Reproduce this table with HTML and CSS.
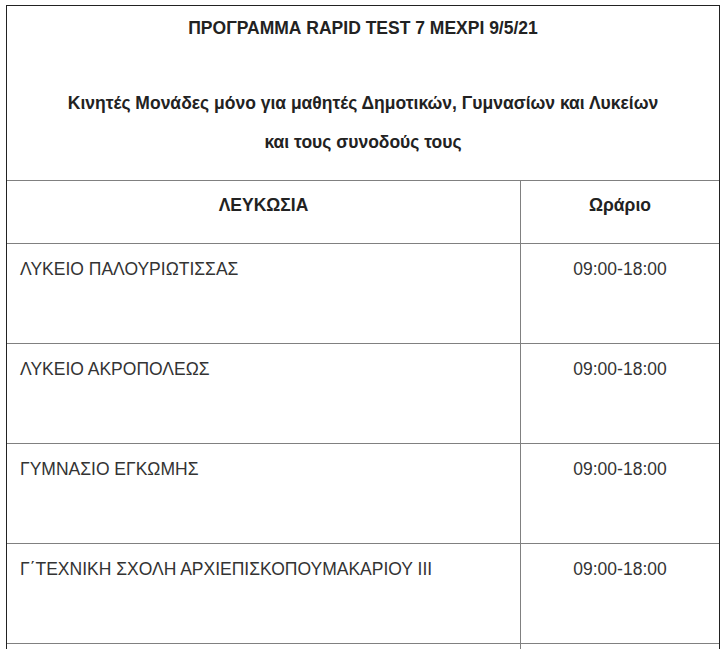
FILE: index.html
```html
<!DOCTYPE html>
<html lang="el">
<head>
<meta charset="utf-8">
<title>Πρόγραμμα Rapid Test</title>
<link rel="stylesheet" href="styles.css">
</head>
<body>
<table class="schedule">
  <colgroup>
    <col class="c-name">
    <col class="c-time">
  </colgroup>
  <tr>
    <td class="title-cell" colspan="2">
      <p class="title">ΠΡΟΓΡΑΜΜΑ RAPID TEST 7 ΜΕΧΡΙ 9/5/21</p>
      <p class="sub sub-first">Κινητές Μονάδες μόνο για μαθητές Δημοτικών, Γυμνασίων και Λυκείων</p>
      <p class="sub">και τους συνοδούς τους</p>
    </td>
  </tr>
  <tr class="head">
    <td class="col-name">ΛΕΥΚΩΣΙΑ</td>
    <td class="col-time">Ωράριο</td>
  </tr>
  <tr class="row">
    <td class="col-name">ΛΥΚΕΙΟ ΠΑΛΟΥΡΙΩΤΙΣΣΑΣ</td>
    <td class="col-time">09:00-18:00</td>
  </tr>
  <tr class="row">
    <td class="col-name">ΛΥΚΕΙΟ ΑΚΡΟΠΟΛΕΩΣ</td>
    <td class="col-time">09:00-18:00</td>
  </tr>
  <tr class="row">
    <td class="col-name">ΓΥΜΝΑΣΙΟ ΕΓΚΩΜΗΣ</td>
    <td class="col-time">09:00-18:00</td>
  </tr>
  <tr class="row">
    <td class="col-name">Γ΄ΤΕΧΝΙΚΗ ΣΧΟΛΗ ΑΡΧΙΕΠΙΣΚΟΠΟΥΜΑΚΑΡΙΟΥ ΙΙΙ</td>
    <td class="col-time">09:00-18:00</td>
  </tr>
  <tr class="row">
    <td class="col-name">&nbsp;</td>
    <td class="col-time">&nbsp;</td>
  </tr>
</table>
</body>
</html>
```
FILE: styles.css
```css
html, body {
  margin: 0;
  padding: 0;
  background: #fff;
}
body {
  padding: 5px 0 0 6px;
  font-family: "Liberation Sans", Arial, sans-serif;
  font-size: 17.5px;
  color: #333;
}
.schedule {
  width: 714px;
  border: 1px solid #222;
  border-collapse: separate;
  border-spacing: 0;
  table-layout: fixed;
}
.c-name {
  width: 513px;
}
.c-time {
  width: 199px;
}
.schedule td {
  padding: 0;
  vertical-align: top;
  line-height: 24px;
}
.title-cell {
  text-align: center;
  font-weight: bold;
  color: #222;
  padding: 10px 0 26px !important;
}
.title-cell p {
  margin: 0;
}
.title {
  margin-bottom: 51px !important;
}
.sub-first {
  margin-bottom: 15px !important;
}
.head td,
.row td {
  border-top: 1px solid #808080;
}
.head td {
  height: 63px;
  box-sizing: border-box;
  padding-top: 12px;
  text-align: center;
  font-weight: bold;
  color: #222;
}
.row td {
  height: 100px;
  box-sizing: border-box;
  padding-top: 13px;
  white-space: nowrap;
}
.row .col-name {
  padding-left: 13px;
}
.col-time {
  border-left: 1px solid #808080;
  text-align: center;
}
```
